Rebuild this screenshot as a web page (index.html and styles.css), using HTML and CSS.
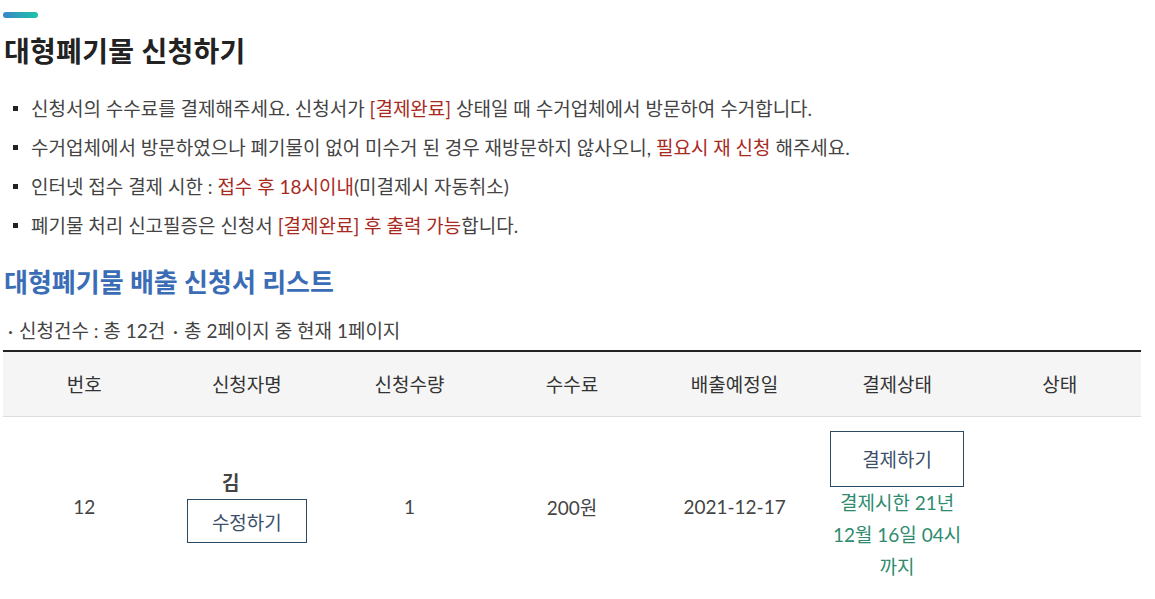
FILE: index.html
```html
<!DOCTYPE html>
<html lang="ko">
<head>
<meta charset="utf-8">
<title>대형폐기물 신청하기</title>
<link rel="stylesheet" href="styles.css">
</head>
<body>
<div class="page">
  <div class="accent-bar"></div>
  <h1 class="page-title">대형폐기물 신청하기</h1>
  <ul class="notice-list">
    <li>신청서의 수수료를 결제해주세요. 신청서가 <span class="hl">[결제완료]</span> 상태일 때 수거업체에서 방문하여 수거합니다.</li>
    <li>수거업체에서 방문하였으나 폐기물이 없어 미수거 된 경우 재방문하지 않사오니, <span class="hl">필요시 재 신청</span> 해주세요.</li>
    <li>인터넷 접수 결제 시한 : <span class="hl">접수 후 18시이내</span>(미결제시 자동취소)</li>
    <li>폐기물 처리 신고필증은 신청서 <span class="hl">[결제완료] 후 출력 가능</span>합니다.</li>
  </ul>
  <h2 class="section-title">대형폐기물 배출 신청서 리스트</h2>
  <p class="count-info"><span class="dot">·</span>신청건수 : 총 12건 <span class="dot">·</span>총 2페이지 중 현재 1페이지</p>
  <table class="req-table">
    <thead>
      <tr>
        <th>번호</th>
        <th>신청자명</th>
        <th>신청수량</th>
        <th>수수료</th>
        <th>배출예정일</th>
        <th>결제상태</th>
        <th>상태</th>
      </tr>
    </thead>
    <tbody>
      <tr>
        <td>12</td>
        <td>
          <div class="name-cell">
            <strong class="name">김</strong>
            <button class="btn btn-edit" type="button">수정하기</button>
          </div>
        </td>
        <td>1</td>
        <td>200원</td>
        <td>2021-12-17</td>
        <td class="pay-cell">
          <button class="btn btn-pay" type="button">결제하기</button>
          <p class="deadline">결제시한 21년 12월 16일 04시 까지</p>
        </td>
        <td></td>
      </tr>
    </tbody>
  </table>
</div>
</body>
</html>
```

FILE: styles.css
```css
* { box-sizing: border-box; }

html, body {
  margin: 0;
  padding: 0;
  background: #fff;
}

body {
  font-family: Lato, "Noto Sans CJK KR", sans-serif;
  color: #444;
}

.page {
  width: 1141px;
  padding: 12px 0 0 3px;
}

.accent-bar {
  width: 35px;
  height: 6px;
  border-radius: 3px;
  background: linear-gradient(90deg, #3a86c8, #1cc4a8);
}

.page-title {
  margin: 14px 0 0 1px;
  font-size: 28px;
  line-height: 38px;
  font-weight: 700;
  color: #222;
  letter-spacing: 0.3px;
}

.notice-list {
  list-style: none;
  margin: 19px 0 0;
  padding: 0 0 0 10px;
}

.notice-list li {
  position: relative;
  padding-left: 18px;
  font-size: 19px;
  line-height: 39px;
  color: #444;
}

.notice-list li::before {
  content: "";
  position: absolute;
  left: 0;
  top: 17px;
  width: 5px;
  height: 5px;
  background: #222;
}

.hl { color: #a82a1e; }

.section-title {
  margin: 20px 0 0 1px;
  font-size: 26px;
  line-height: 34px;
  font-weight: 700;
  color: #3a6db5;
}

.count-info {
  margin: 20px 0 0 2px;
  font-size: 19px;
  line-height: 24px;
  color: #444;
}

.count-info .dot {
  display: inline-block;
  padding: 0 6px 0 3px;
}

.req-table {
  width: 100%;
  margin-top: 7px;
  border-collapse: collapse;
  table-layout: fixed;
  border-top: 2px solid #222;
}

.req-table th {
  height: 65px;
  background: #f5f5f5;
  border-bottom: 1px solid #ddd;
  font-size: 19px;
  font-weight: 400;
  color: #333;
  text-align: center;
}

.req-table td {
  padding: 14px 14px;
  font-size: 19px;
  color: #444;
  text-align: center;
  vertical-align: middle;
}

.name-cell {
  display: flex;
  flex-direction: column;
  align-items: center;
}

.name {
  font-size: 19px;
  line-height: 26px;
  font-weight: 700;
  color: #444;
  padding-right: 32px;
}

.btn {
  font-family: Lato, "Noto Sans CJK KR", sans-serif;
  font-size: 19px;
  color: #3b4f6b;
  background: #fff;
  border: 1px solid #2b4a63;
  border-radius: 0;
  cursor: pointer;
}

.btn-edit {
  width: 120px;
  height: 44px;
  margin-top: 3px;
}

.btn-pay {
  width: 134px;
  height: 56px;
}

.deadline {
  margin: 0;
  font-size: 19px;
  line-height: 32px;
  color: #2e8b6e;
}
```
